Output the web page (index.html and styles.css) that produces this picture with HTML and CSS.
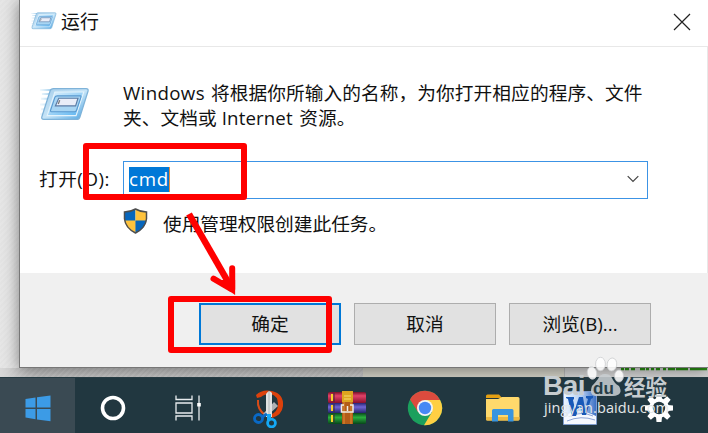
FILE: index.html
```html
<!DOCTYPE html>
<html lang="zh-CN">
<head>
<meta charset="utf-8">
<title>运行</title>
<link rel="stylesheet" href="styles.css">
</head>
<body>
<svg class="defs" aria-hidden="true">
  <defs>
    <linearGradient id="frame" x1="0" y1="0" x2="1" y2="1"><stop offset="0" stop-color="#a5cdea"/><stop offset=".5" stop-color="#c6e4f7"/><stop offset="1" stop-color="#4aa3e2"/></linearGradient>
    <linearGradient id="glass" x1="0" y1="0" x2="1" y2="1"><stop offset="0" stop-color="#e5f4fd"/><stop offset="1" stop-color="#57b2f0"/></linearGradient>
    <linearGradient id="speed"><stop offset="0" stop-color="#b9def5" stop-opacity=".2"/><stop offset="1" stop-color="#86bfe6"/></linearGradient>
    <symbol id="run" viewBox="0 0 52 36">
      <path d="M0 2h14v2H0zM2 6h12v2H2zM1 11h12v2H1zM0 17h10v2H0zM1 22h9v2H1zM0 27h8v2H0z" fill="url(#speed)"/>
      <path d="M14 1.500H48Q50.500 1.500 50 4L41.500 31Q40.800 33.500 38 33.500H4Q1 33.500 2 30.500L10.500 4Q11.300 1.500 14 1.500Z" fill="url(#frame)" stroke="#7fb3d9" stroke-width="1.300"/>
      <path d="M15.500 5H45.500L37.500 29.500H7.500Z" fill="url(#glass)" stroke="#e4f3fc" stroke-width="1.200"/>
      <path d="M18 9H42Q43 9 42.500 10.500L38 24Q37.500 25.500 36 25.500H12.500Q10.500 25.500 11 24L15.500 10.500Q16 9 18 9Z" fill="#a8d5f3" stroke="#5a99cf" stroke-width="1.100"/>
      <path d="M19.500 11.500H39.500L37 19.500H16Z" fill="#e9edf8" stroke="#5a7ba5" stroke-width="1.200"/>
      <path d="M20.500 13.500L19 17.500" stroke="#777" stroke-width="1.300"/>
    </symbol>
  </defs>
</svg>
<main class="screen">
  <div class="desktop"><i class="paper"></i><i class="page"></i><svg class="green" viewBox="0 0 143 9"><path d="M56 1h3M60 1h4M66 1h4M75 1h5M81 1h3M86 1h3M91 1h4M98 1h3M103 1h7M111 1h12M125 1h17" stroke="#278c12" stroke-width="2.500"/></svg></div>
  <section class="dialog">
    <header class="titlebar">
      <svg class="run-small"><use href="#run"/></svg>
      <h1>运行</h1>
      <svg class="close" viewBox="0 0 18 18"><path d="M1 1L17 17M17 1L1 17"/></svg>
    </header>
    <div class="content">
      <div class="intro">
        <svg class="run-large"><use href="#run"/></svg>
        <p><span class="w1">Windows</span>将根据你所输入的名称，为你打开相应的程序、文件<br>夹、文档或<span class="w2">Internet</span>资源。</p>
      </div>
      <div class="field">
        <label>打开(O):</label>
        <div class="combo"><span class="selected">cmd</span><svg class="chevron" viewBox="0 0 12 8"><path d="M.7 1.200L6 6.500L11.300 1.200"/></svg></div>
      </div>
      <div class="admin">
        <svg class="shield" viewBox="0 0 24 26">
          <path d="M12 1Q7 4 1 4V11Q2 20 12 25Z" fill="#0766bc"/><path d="M12 1Q17 4 23 4V11Q22 20 12 25Z" fill="#ffc33d"/>
          <path d="M1 12.500H12V25Q2 20.500 1 12.500Z" fill="#ffc33d"/><path d="M12 12.500H23Q22 20.500 12 25Z" fill="#0766bc"/>
          <path d="M12 1Q7 4 1 4V11Q2 20 12 25Q22 20 23 11V4Q17 4 12 1Z" fill="none" stroke="#4d4e4e" stroke-width="1.500"/>
        </svg>
        <span>使用管理权限创建此任务。</span>
      </div>
    </div>
    <footer class="actions">
      <span class="button primary">确定</span><span class="button">取消</span><span class="button">浏览(B)...</span>
    </footer>
  </section>
  <nav class="taskbar">
    <span class="task start"><svg width="26" height="27" viewBox="0 0 26 27"><path d="M.5 4L10.500 2.500V12.500H.5ZM12 2.300L25.500 .5V12.500H12ZM.5 14H10.500V24.200L.5 22.500ZM12 14H25.500V26.300L12 24.400Z" fill="#3c9be6"/></svg></span>
    <span class="task system"><svg width="26" height="26" viewBox="0 0 26 26"><circle cx="13" cy="13" r="10.500" fill="none" stroke="#fff" stroke-width="3.600"/></svg></span>
    <span class="task system"><svg width="26" height="26" viewBox="0 0 26 26"><g fill="none" stroke="#e8ecee" stroke-width="1.300"><path d="M1 .5V4.500H17V.5M1 8H17V18H1ZM1 25.500V21H17V25.500M24 .5V25.500"/></g><path d="M22.200 8h3.600v3.500h-3.600z" fill="#fff"/></svg></span>
    <span class="task app first"><svg width="34" height="40" viewBox="0 0 34 40">
      <path d="M4 7Q10 1 20 3Q32 6 31 18Q30 27 20 30L18 27Q26 24 26 16Q26 8 19 6Q12 6 9 9L5 10Z" fill="#dc410c"/>
      <path d="M6 12Q5 21 13 27" fill="none" stroke="#d94b18" stroke-width="2"/>
      <path d="M22 14L26 18L15 28L11 26Z" fill="#aeb2b5"/><path d="M14 6Q17 1 20 5L20 29H14Z" fill="#e0e2e2"/><path d="M17 3V28" stroke="#b0b6b9"/>
      <circle cx="6.500" cy="30.500" r="4" fill="none" stroke="#0969c6" stroke-width="2.800"/><path d="M10 29L15 26" stroke="#0969c6" stroke-width="3"/>
      <circle cx="19.500" cy="35" r="3.900" fill="none" stroke="#14a8f6" stroke-width="2.800"/><path d="M17 26V32" stroke="#14a8f6" stroke-width="4"/>
    </svg></span>
    <span class="task app"><svg width="38" height="34" viewBox="0 0 38 34">
      <defs><linearGradient id="r" x2="0" y2="1"><stop stop-color="#791128"/><stop offset=".35" stop-color="#e34269"/><stop offset="1" stop-color="#89112c"/></linearGradient><linearGradient id="b" x2="0" y2="1"><stop stop-color="#272574"/><stop offset=".4" stop-color="#7166d3"/><stop offset="1" stop-color="#25236d"/></linearGradient><linearGradient id="g" x2="0" y2="1"><stop stop-color="#09471c"/><stop offset=".4" stop-color="#2baf3e"/><stop offset="1" stop-color="#07451a"/></linearGradient></defs>
      <rect y="1" width="38" height="11" rx="1.500" fill="url(#r)"/><rect y="12" width="38" height="10" rx="1.500" fill="url(#b)"/><rect y="22" width="38" height="11" rx="1.500" fill="url(#g)"/>
      <path d="M4 3v7M4 14v6M4 24v7" stroke="#f9d328" stroke-width="2"/><path d="M6 2v9M6 13v8M6 23v9" stroke="#412838"/>
      <path d="M14 0H25V11H14Z" fill="#dea51f"/><path d="M16 5H23M16 8H23" stroke="#f7dc70"/><path d="M14 11H25V33H14Z" fill="#b35c18"/><path d="M16 11V33M23 11V33" stroke="#df8e36"/><path d="M16 14H13.500V21H25V14H22M19.500 15V20" fill="none" stroke="#efeee5" stroke-width="1.500"/>
    </svg></span>
    <span class="task app"><svg width="36" height="36" viewBox="0 0 36 36"><circle cx="18" cy="18" r="17.200" fill="#1ba05d"/><path d="M3 9.500A17.200 17.200 0 0 1 33.100 10H18L11 22Z" fill="#dc4b3e"/><path d="M33.100 10A17.200 17.200 0 0 1 17 35.200L25 22L18 10Z" fill="#ffcf43"/><circle cx="18" cy="18" r="8" fill="#f3f4f3"/><circle cx="18" cy="18" r="6.200" fill="#4688f4"/></svg></span>
    <span class="task app"><svg width="34" height="28" viewBox="0 0 34 28"><path d="M0 2Q0 .5 1.500 .5H13L16 4H0Z" fill="#e5a012"/><path d="M0 5H12L16 3H32Q33.500 3 33.500 4.500V25Q33.500 26.500 32 26.500H1.500Q0 26.500 0 25Z" fill="#ffd96c"/><path d="M0 23H33.500V25Q33.500 26.500 32 26.500H1.500Q0 26.500 0 25Z" fill="#edb942"/><path d="M6 16.500Q6 15 7.500 15H26Q27.500 15 27.500 16.500V27.500H22V21H12V27.500H6Z" fill="#3995df"/></svg></span>
    <span class="task app word"><svg width="34" height="34" viewBox="0 0 34 34"><defs><linearGradient id="word" x2="1"><stop stop-color="#ecf5ff"/><stop offset=".55" stop-color="#b5cff2"/><stop offset="1" stop-color="#386dc2"/></linearGradient></defs><path d="M.5 .5H33.500V33.500H.5Z" fill="url(#word)" stroke="#7f9dce"/><path d="M1 26Q13 15 33 25V33H1Z" fill="#f6f9ff"/><path d="M8 25Q18 20 30 25M4 30Q18 24 32 29" fill="none" stroke="#8da4d6"/><path d="M3 6H11V8L10 9L12 18L16 6H20L22 18L25 8L23 7V5H30V7L28 8L23 24H19L17 14L13 25H9L5 8L3 7Z" fill="#1859b8"/></svg></span>
    <span class="task app"><svg width="28" height="28" viewBox="0 0 28 28"><g fill="#fff"><circle cx="14" cy="14" r="10"/><g id="teeth"><path d="M11.500 0H16.500L17 5H11ZM11 23H17L16.500 28H11.500Z"/></g><use href="#teeth" transform="rotate(45 14 14)"/><use href="#teeth" transform="rotate(90 14 14)"/><use href="#teeth" transform="rotate(135 14 14)"/></g><circle cx="14" cy="14" r="6.200" fill="#223840"/></svg></span>
  </nav>
  <div class="mark mark-field"></div>
  <div class="mark mark-ok"></div>
  <svg class="arrow" viewBox="0 0 60 90"><path d="M9 4L51 77" stroke-width="6.500"/><path d="M33.500 68.700L51 79M52.200 58.300V79" stroke-width="6" stroke-linecap="round"/><path d="M40 70L55.100 70V85L48 80Z" fill="red" stroke="none"/></svg>
  <div class="watermark">
    <svg class="paw" viewBox="0 0 38 42"><g fill="#fff" fill-opacity=".87" stroke="#cbcdcf" stroke-width=".8"><ellipse cx="14.500" cy="8" rx="4.900" ry="6.700"/><ellipse cx="26" cy="8.500" rx="4.800" ry="6.500" transform="rotate(8 26 8)"/><ellipse cx="6" cy="17" rx="4.700" ry="6.200" transform="rotate(-12 6 17)"/><ellipse cx="33" cy="20" rx="4.500" ry="6"/><path d="M19 18Q14 18 12 23Q9 27 6 30Q2 41 13 40H27Q38 39 33 30Q28 27 26 22Q24 18 19 18Z" fill="#c8ced1" stroke="none"/></g></svg>
    <span class="bai">Bai</span><span class="du">du</span><span class="jingyan">经验</span><span class="url">jingyan.baidu.com</span>
  </div>
</main>
</body>
</html>
```

FILE: styles.css
```css
* { box-sizing: border-box; }
body { margin: 0; overflow: hidden; font: 18.7px "Open Sans", "Noto Sans CJK SC", sans-serif; color: #111; }
.defs { position: absolute; width: 0; height: 0; }
.screen { position: relative; width: 708px; height: 433px; overflow: hidden; display: grid; grid-template-rows: 368px 9px 56px; background: repeating-linear-gradient(135deg, #e3e3e3 0 2px, #e6e6e6 2px 4px); }
.screen > * { min-width: 0; }
.dialog { grid-row: 1; grid-column: 1; margin-left: 19px; height: 368px; border-left: 1px solid #777; border-bottom: 1px solid #777; background: #fff; box-shadow: -1px 2px 14px #0006; display: grid; grid-template-rows: 46px 227px 94px; z-index: 1; }
.titlebar { display: flex; align-items: center; padding: 0 17px 2px 11px; }
h1 { margin: -2px auto 0 4px; font-size: 18.9px; line-height: 24px; font-weight: 400; font-family: "Noto Sans CJK SC", sans-serif; }
.run-small { width: 26px; height: 18px; margin-top: -2px; }
.close { width: 18px; height: 18px; fill: none; stroke: #222; stroke-width: 1.2; }
.content { border-top: 1px solid #e8e8e8; border-right: 1px solid #e8e8e8; display: flex; flex-direction: column; }
.intro { display: flex; height: 114px; padding: 33px 0 0 20px; }
.run-large { width: 50px; height: 35px; margin-top: 7px; }
p { margin: 0 0 0 33px; line-height: 25px; white-space: nowrap; letter-spacing: .07px; }
.w1, .w2 { display: inline-block; letter-spacing: .35px; }
.w1 { width: 88px; }
.w2 { width: 77.5px; margin-left: 5px; letter-spacing: .1px; }
.field { display: flex; height: 38px; align-items: center; padding-left: 19px; }
.field label { width: 84px; white-space: nowrap; letter-spacing: .5px; padding-bottom: 5px; }
.combo { width: 525px; height: 38px; border: 1.5px solid #3c93e5; display: flex; align-items: center; justify-content: space-between; padding: 0 8px 2px 5px; }
.selected { width: 41px; height: 25px; line-height: 23px; color: #fff; background: #0078d7; border-right: 1px solid #e88c3a; letter-spacing: .7px; }
.chevron { width: 12px; height: 8px; fill: none; stroke: #444; stroke-width: 1.2; }
.admin { display: flex; padding: 9px 0 0 103px; gap: 15px; }
.shield { width: 25px; height: 26px; }
.admin span { line-height: 32px; }
.actions { background: #f0f0f0; display: flex; gap: 13px; padding: 30px 0 0 179px; }
.button { width: 142px; height: 42px; border: 1px solid #adadad; background: #e1e1e1; display: flex; align-items: center; justify-content: center; padding-bottom: 3px; }
.primary { border: 2px solid #0078d7; }
.desktop { grid-row: 2; position: relative; z-index: 1; display: grid; grid-template-columns: 363px 202px 143px; }
.paper { background: linear-gradient(90deg, #d8d8d8, #c5c5c500 10%), repeating-linear-gradient(135deg, #bdbdbd 0 2px, #c4c4c4 2px 4px); }
.page { background: #cecdc2; border-right: 1px solid #b4b4b4; }
.green { background: #cfcfcf; width: 143px; height: 9px; }
.taskbar { grid-row: 3; background: #213740; display: flex; border-top: 1px solid #263b43; z-index: 1; }
.task { display: flex; align-items: center; justify-content: center; flex: none; padding-top: 5px; }
.start { width: 75px; background: #3a4a53; }
.system { width: 75px; }
.app { width: 78px; }
.first { margin-left: 5px; }
.word { padding-right: 3px; }
.mark { position: absolute; border: 6px solid red; border-radius: 3px; z-index: 3; }
.mark-field { left: 83px; top: 143px; width: 164px; height: 57px; }
.mark-ok { left: 168px; top: 296px; width: 164px; height: 57px; }
.arrow { position: absolute; left: 180px; top: 210px; width: 60px; height: 90px; fill: none; stroke: red; z-index: 3; }
.watermark { position: absolute; left: 543px; top: 356px; width: 150px; height: 68px; z-index: 4; color: #c6cccf; white-space: nowrap; }
.watermark span, .paw { position: absolute; }
.paw { left: 43px; top: 0; width: 38px; height: 42px; }
.bai { left: 0; top: 13px; font: bold 28px/34px "Liberation Sans", sans-serif; letter-spacing: -.5px; }
.du { left: 50px; top: 21px; font: bold 17px/24px "Liberation Sans", sans-serif; color: #263d46; }
.jingyan { left: 81px; top: 16px; font: bold 21.5px/28px "Noto Sans CJK SC", sans-serif; }
.url { left: 1px; top: 43px; color: #e4e8e9; font: 14.5px/18px "Open Sans", sans-serif; letter-spacing: .1px; }
```
